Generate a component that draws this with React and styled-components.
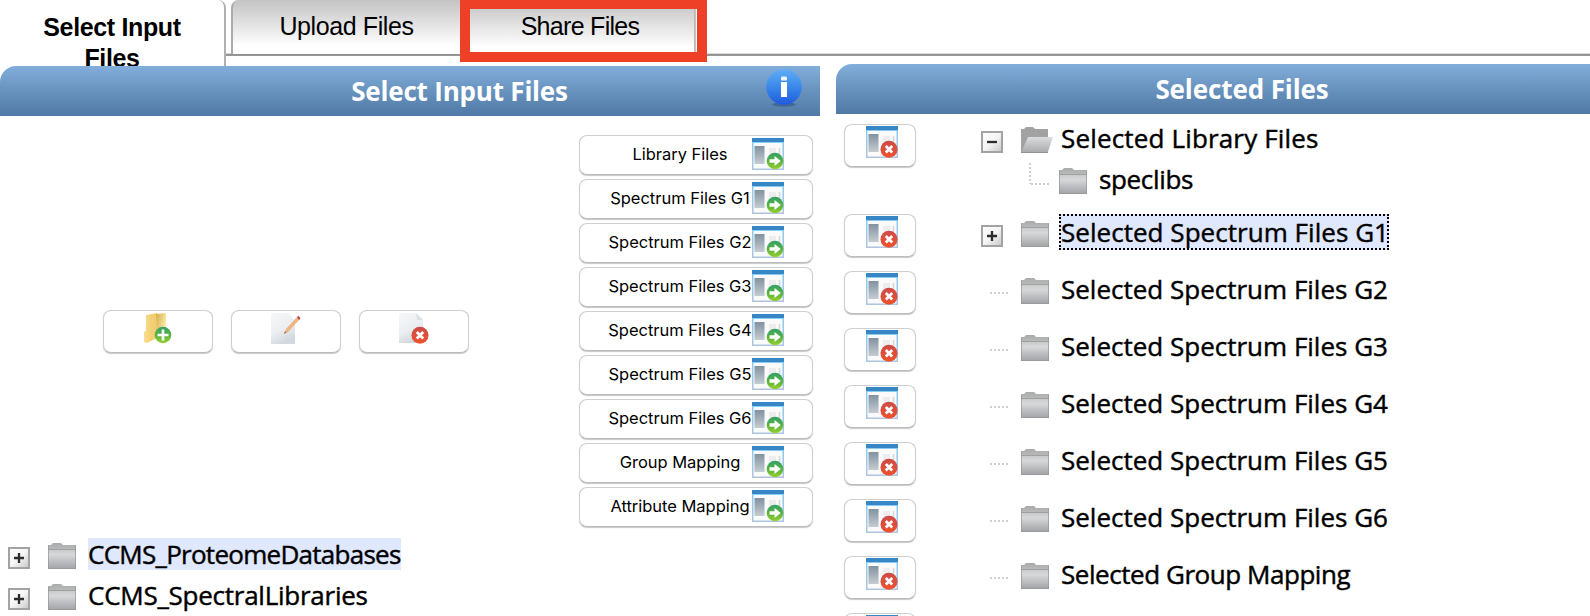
import React from "react";
import styled, { createGlobalStyle, css } from "styled-components";

const Global = createGlobalStyle`
  *, *::before, *::after { box-sizing: border-box; }
  html, body { margin: 0; padding: 0; background: #fff; overflow: hidden; }
  button { font: inherit; color: inherit; }
  svg { display: block; flex: none; }
`;

const humanist = `"Open Sans", "Noto Sans", sans-serif`;

const Page = styled.div`
  width: 1590px;
  height: 616px;
  overflow: hidden;
  background: #fff;
  color: #000;
  font-family: ${humanist};
`;

const TabBar = styled.nav`
  display: flex;
  align-items: flex-start;
  height: 64px;
  font-family: "Liberation Sans", Arial, sans-serif;
  font-size: 25px;
  line-height: 31px;
  background: linear-gradient(#dcdcdc, #dcdcdc) 0 53px / 100% 1px no-repeat,
    linear-gradient(#8f8f8f, #999) 0 54px / 100% 2px no-repeat;
`;

const Tab = styled.div`
  flex: none;
  width: 229px;
  height: 54px;
  padding-top: 11px;
  text-align: center;
  letter-spacing: -0.4px;
  background: linear-gradient(#c3c3c3, #fff 46px);
  border-left: 2px solid #ababab;
  border-top-left-radius: 8px;
`;

const ActiveTab = styled.div`
  flex: none;
  width: 226px;
  height: 68px;
  margin-right: 5px;
  padding: 12px 29px 0;
  text-align: center;
  font-weight: bold;
  letter-spacing: -0.35px;
  background: #fff;
  border-right: 2px solid #b0b0b0;
  border-top-right-radius: 8px;
`;

const HighlightedTab = styled.div`
  flex: none;
  position: relative;
  width: 247px;
  height: 62px;
  padding: 2px 7px 0 0;
  text-align: center;
  border: 10px solid #ee4026;
  border-top-width: 9px;
  letter-spacing: -0.7px;
  background: linear-gradient(90deg, transparent 224px, #b5b5b5 224px, #c8c8c8 226px, #fff 226px),
    linear-gradient(#cdcdcd, #fff 38px);
  background-origin: padding-box;
`;

const Columns = styled.div`
  display: grid;
  grid-template-columns: 820px 754px;
  column-gap: 16px;
`;

const Panel = styled.section`
  position: relative;
  padding-top: ${(p) => p.$offset || 0}px;
`;

const PanelHeader = styled.header`
  display: flex;
  align-items: flex-start;
  height: 50px;
  padding-right: ${(p) => p.$right || 0}px;
  border-top-left-radius: 16px;
  background: linear-gradient(#82aedb, #6b95c1 45%, #5079a5);
  color: #fff;
`;

const PanelTitle = styled.h2`
  flex: 1;
  margin: 0;
  padding-left: ${(p) => p.$shift}px;
  text-align: center;
  font-size: 26px;
  font-weight: 700;
  line-height: 51px;
  letter-spacing: ${(p) => p.$spacing}px;
`;

const raised = css`
  border: 1px solid #cfcfcf;
  border-bottom-color: #bcbcbc;
  border-radius: 8px;
  background: #fff;
  box-shadow: 0 1px 1px rgba(0, 0, 0, 0.22);
`;

const Toolbar = styled.div`
  display: flex;
  align-items: center;
  justify-content: space-between;
  height: 422px;
  padding: 0 7px 0 103px;
`;

const FileActions = styled.div`
  display: flex;
  gap: 18px;
  margin-top: 8px;
`;

const IconButton = styled.button`
  ${raised}
  display: flex;
  flex: none;
  justify-content: center;
  width: 110px;
  height: 43px;
  padding: 1px 3px 0 0;
`;

const RemoveButton = styled(IconButton)`
  width: 72px;
  padding: 1px 0 0 4px;
`;

const TargetList = styled.div`
  display: flex;
  flex-direction: column;
  gap: 4px;
  margin-top: 8px;
`;

const TargetButton = styled.button`
  ${raised}
  display: flex;
  align-items: flex-start;
  width: 234px;
  height: 40px;
  padding: 2px 0 0 28px;
  font-family: Inter, "Liberation Sans", sans-serif;
  font-size: 16.5px;
`;

const TargetName = styled.span`
  width: 144px;
  line-height: 33px;
  text-align: center;
  white-space: nowrap;
  letter-spacing: -0.02px;
`;

const SourceTree = styled.div`
  display: flex;
  flex-direction: column;
`;

const SourceRow = styled.div`
  display: grid;
  grid-template-columns: 40px 40px auto;
  justify-content: start;
  align-items: start;
  height: 41px;
  padding-left: 8px;
`;

const Name = styled.span`
  height: 32px;
  font-size: 26px;
  line-height: 33px;
  white-space: nowrap;
  letter-spacing: ${(p) => p.$spacing || 0}px;
  -webkit-text-stroke: 0.45px #000;
  background: ${(p) => (p.$marked ? "#e0e8fd" : "none")};
`;

const Drop = styled.div`
  padding-top: ${(p) => p.$by || 0}px;
  padding-left: ${(p) => p.$in || 0}px;
`;

const Selection = styled.div`
  display: grid;
  grid-template-columns: 137px 40px 40px auto;
  justify-content: start;
  align-items: start;
  height: 57px;
  padding-left: 8px;
`;

const OpenSelection = styled(Selection)`
  grid-template-rows: 39px auto;
  height: 90px;
`;

const SelectionName = styled(Name)`
  height: 36px;
  line-height: ${(p) => p.$line || 36}px;
  margin-left: -2px;
  padding-left: 2px;
  outline: ${(p) => (p.$marked ? "2px dotted #000" : "none")};
  outline-offset: -2px;
`;

const Branch = styled.div`
  grid-column: 3 / 5;
  display: grid;
  grid-template-columns: 38px 40px auto;
  justify-content: start;
  align-items: start;
`;

const Defs = styled.svg`
  position: absolute;
`;

const Gradients = () => (
  <Defs width="0" height="0">
    <defs>
      <linearGradient id="folder" x2="0" y2="1">
        <stop offset="0" stopColor="#aaa" />
        <stop offset=".25" stopColor="#b9babb" />
        <stop offset=".27" stopColor="#c9cacb" />
        <stop offset=".45" stopColor="#d7d8da" />
        <stop offset="1" stopColor="#a0a2a5" />
      </linearGradient>
      <linearGradient id="openFolder" x2="0" y2="1">
        <stop stopColor="#dcdddf" />
        <stop offset="1" stopColor="#a6a8aa" />
      </linearGradient>
      <linearGradient id="green" x2="0" y2="1">
        <stop stopColor="#33a06b" />
        <stop offset=".5" stopColor="#57b23e" />
        <stop offset="1" stopColor="#96d02d" />
      </linearGradient>
      <linearGradient id="red" x2="0" y2="1">
        <stop stopColor="#ce4b49" />
        <stop offset="1" stopColor="#ee522b" />
      </linearGradient>
      <linearGradient id="bar" x2="0" y2="1">
        <stop stopColor="#81929f" />
        <stop offset="1" stopColor="#c5ccd2" />
      </linearGradient>
      <linearGradient id="frame" x2="0" y2="1">
        <stop stopColor="#82cdf3" />
        <stop offset="1" stopColor="#b0c4e0" />
      </linearGradient>
      <linearGradient id="sheet" x2="0.4" y2="1">
        <stop stopColor="#f6f7f8" />
        <stop offset=".6" stopColor="#eceff1" />
        <stop offset="1" stopColor="#d2d9de" />
      </linearGradient>
      <linearGradient id="amber" x2="1" y2="0">
        <stop stopColor="#f8dc90" />
        <stop offset=".6" stopColor="#f2cf73" />
        <stop offset="1" stopColor="#efcb6c" />
      </linearGradient>
      <linearGradient id="flap" x2="1" y2="0.6">
        <stop stopColor="#d4ac48" />
        <stop offset="1" stopColor="#fff3b4" />
      </linearGradient>
      <linearGradient id="box" x2="1" y2="1">
        <stop stopColor="#fff" />
        <stop offset=".5" stopColor="#f5f5f5" />
        <stop offset="1" stopColor="#c6c6c6" />
      </linearGradient>
      <linearGradient id="info" x2="0" y2="1">
        <stop stopColor="#60aef3" />
        <stop offset=".5" stopColor="#3b88eb" />
        <stop offset="1" stopColor="#1d5ade" />
      </linearGradient>
    </defs>
  </Defs>
);

const RedBadge = () => (
  <>
    <circle cx="23" cy="23.3" r="8.5" fill="url(#red)" />
    <path d="M19.8 20l6.4 6.4M26.2 20l-6.4 6.4" stroke="#fff" strokeWidth="2.8" />
  </>
);

const WindowIcon = ({ remove }) => (
  <svg width="32" height="32" viewBox="0 0 32 32">
    <rect width="32" height="32" fill="url(#frame)" />
    <rect width="32" height="4" fill="#3786c5" />
    <rect x="1.5" y="5" width="29" height="25.5" fill="#fafafa" />
    <rect x="2.5" y="8" width="10" height="18" fill="url(#bar)" />
    <rect x="17" y="10" width="7" height="8" fill="#ededee" />
    <path d="M27.5 10v10" stroke="#d3d7da" strokeWidth="1.5" />
    {remove ? (
      <RedBadge />
    ) : (
      <>
        <circle cx="23" cy="23" r="8.3" fill="url(#green)" />
        <path d="M17.5 21.3h5v-3.4l6.3 5.1-6.3 5.1v-3.4h-5z" fill="#fff" />
      </>
    )}
  </svg>
);

const NewFolderIcon = () => (
  <svg width="32" height="32" viewBox="0 0 32 32">
    <path d="M5 3l11-2v25l-10 5-3-1V20l2-1z" fill="url(#amber)" />
    <path d="M15 2l10-1v20l-8 9z" fill="url(#flap)" />
    <circle cx="22" cy="23" r="8.3" fill="url(#green)" />
    <path d="M16.5 23h11M22 17.5v11" stroke="#fff" strokeWidth="2.7" />
  </svg>
);

const PageIcon = ({ remove }) => (
  <svg width="32" height="32" viewBox="0 0 32 32">
    {remove ? (
      <>
        <path d="M2 1h17l7 7v23H2z" fill="url(#sheet)" />
        <path d="M19 1l7 7h-6z" fill="#dce0e3" />
        <RedBadge />
      </>
    ) : (
      <>
        <path d="M2 1h18l6 7v24H2z" fill="url(#sheet)" />
        <path d="M15 22l2-5L28 5l3 2-12 13z" fill="#eeb481" />
        <path d="M15 22l1-3 1.7 1.5z" fill="#a97a63" />
        <path d="M28 5l1.5-1 2 2-1.5 2z" fill="#b64254" />
      </>
    )}
  </svg>
);

const ToggleIcon = ({ open }) => (
  <svg width="22" height="22" viewBox="0 0 22 22">
    <rect x="1" y="1" width="20" height="20" fill="url(#box)" stroke="#a3a3a3" strokeWidth="2" />
    <path d={open ? "M6 11h10" : "M6 11h10M11 6v10"} stroke="#2c2c2c" strokeWidth="2.3" />
  </svg>
);

const FolderIcon = () => (
  <svg width="28" height="26" viewBox="0 0 28 26">
    <path d="M0 2h3l2-2h8l2 2h13v24H0z" fill="url(#folder)" />
    <path d="M0 6.5h28M.5 2.5V26M27.5 2.5V26M0 25.5h28" stroke="#969696" strokeOpacity=".7" />
  </svg>
);

const OpenFolderIcon = () => (
  <svg width="32" height="26" viewBox="0 0 32 26">
    <path d="M0 2h3l2-2h7l2 2h13v8l-2 15H0z" fill="#a2a2a2" />
    <path d="M0 26L7 10h25l-5.5 16z" fill="url(#openFolder)" />
    <path d="M0 25.5h27" stroke="#929292" />
  </svg>
);

const Dots = () => (
  <svg width="20" height="2">
    <path d="M0 1h20" stroke="#cfcfcf" strokeWidth="2" strokeDasharray="2 2" />
  </svg>
);

const Elbow = () => (
  <svg width="20" height="22">
    <path d="M1 0v21M2 21h18" fill="none" stroke="#cfcfcf" strokeWidth="2" strokeDasharray="2 2" />
  </svg>
);

const InfoIcon = () => (
  <svg width="40" height="42" viewBox="0 0 40 42">
    <ellipse cx="20" cy="37.5" rx="12" ry="2.2" fill="#25476f" opacity=".45" />
    <circle cx="20" cy="20" r="17.8" fill="url(#info)" />
    <path d="M17 15h6v15h-6z" fill="#fff" />
    <rect x="17" y="9.5" width="6" height="4" rx="1" fill="#e9f4ff" />
  </svg>
);

const targets = [
  "Library Files",
  "Spectrum Files G1",
  "Spectrum Files G2",
  "Spectrum Files G3",
  "Spectrum Files G4",
  "Spectrum Files G5",
  "Spectrum Files G6",
  "Group Mapping",
  "Attribute Mapping",
];

const sources = [
  { name: "CCMS_ProteomeDatabases", marked: true, spacing: -0.73 },
  { name: "CCMS_SpectralLibraries", spacing: -0.25 },
];

const selections = [
  { name: "Selected Spectrum Files G1", marked: true, spacing: 0.04 },
  { name: "Selected Spectrum Files G2" },
  { name: "Selected Spectrum Files G3" },
  { name: "Selected Spectrum Files G4" },
  { name: "Selected Spectrum Files G5" },
  { name: "Selected Spectrum Files G6" },
  { name: "Selected Group Mapping", spacing: -0.45 },
  { name: "" },
];

export default function App() {
  return (
    <Page>
      <Global />
      <Gradients />
      <TabBar>
        <ActiveTab>Select Input Files</ActiveTab>
        <Tab>Upload Files</Tab>
        <HighlightedTab>Share Files</HighlightedTab>
      </TabBar>
      <Columns>
        <Panel $offset={2}>
          <PanelHeader $right={16}>
            <PanelTitle $shift={155} $spacing={-0.2}>Select Input Files</PanelTitle>
            <Drop $by={1}><InfoIcon /></Drop>
          </PanelHeader>
          <Toolbar>
            <FileActions>
              <IconButton><NewFolderIcon /></IconButton>
              <IconButton><PageIcon /></IconButton>
              <IconButton><PageIcon remove /></IconButton>
            </FileActions>
            <TargetList>
              {targets.map((name) => (
                <TargetButton key={name}>
                  <TargetName>{name}</TargetName>
                  <WindowIcon />
                </TargetButton>
              ))}
            </TargetList>
          </Toolbar>
          <SourceTree>
            {sources.map(({ name, marked, spacing }) => (
              <SourceRow key={name}>
                <Drop $by={9}><ToggleIcon /></Drop>
                <Drop $by={5}><FolderIcon /></Drop>
                <Name $marked={marked} $spacing={spacing}>{name}</Name>
              </SourceRow>
            ))}
          </SourceTree>
        </Panel>
        <Panel>
          <PanelHeader>
            <PanelTitle $shift={58} $spacing={-0.1}>Selected Files</PanelTitle>
          </PanelHeader>
          <Drop $by={10}>
            <OpenSelection>
              <RemoveButton><WindowIcon remove /></RemoveButton>
              <Drop $by={7}><ToggleIcon open /></Drop>
              <Drop $by={3}><OpenFolderIcon /></Drop>
              <SelectionName $line={29} $spacing={0.16}>Selected Library Files</SelectionName>
              <Branch>
                <Drop $in={8}><Elbow /></Drop>
                <Drop $by={5}><FolderIcon /></Drop>
                <Name $spacing={-0.35}>speclibs</Name>
              </Branch>
            </OpenSelection>
            {selections.map(({ name, marked, spacing }, i) => (
              <Selection key={i}>
                <RemoveButton><WindowIcon remove /></RemoveButton>
                {marked ? <Drop $by={11}><ToggleIcon /></Drop> : <Drop $by={21} $in={9}><Dots /></Drop>}
                <Drop $by={7}><FolderIcon /></Drop>
                <SelectionName $marked={marked} $spacing={spacing}>{name}</SelectionName>
              </Selection>
            ))}
          </Drop>
        </Panel>
      </Columns>
    </Page>
  );
}
